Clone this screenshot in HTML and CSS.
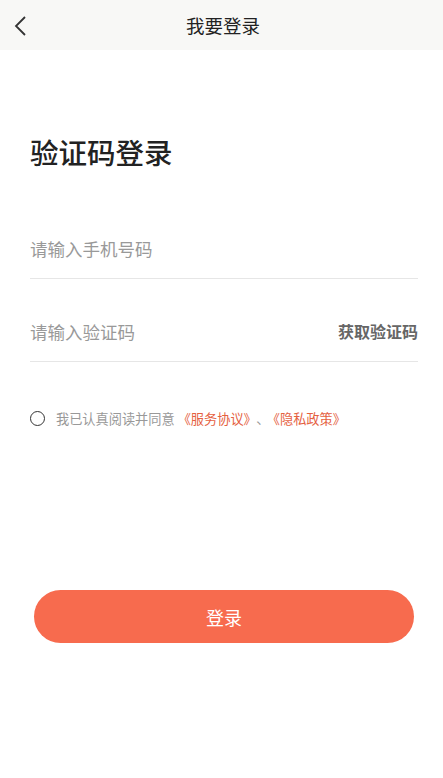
FILE: index.html
```html
<!DOCTYPE html>
<html>
<head>
    <meta charset="UTF-8">
    <title>我要登录</title>
    <link rel="stylesheet" href="styles.css">
</head>
<body>

<div class="header">
    <span class="back">
        <svg width="14" height="22" viewBox="0 0 14 22">
            <path d="M12 2 L3 11 L12 20" fill="none" stroke="#333" stroke-width="1.8"/>
        </svg>
    </span>
    <div class="title">我要登录</div>
</div>

<div class="container">
    <h1>验证码登录</h1>

    <!-- Поля ввода -->
    <div class="field">
        <input type="text" placeholder="请输入手机号码">
    </div>
    <div class="field">
        <input type="text" placeholder="请输入验证码">
        <span class="get-code">获取验证码</span>
    </div>

    <div class="agree">
        <span class="check"></span>
        <span>我已认真阅读并同意 <a href="#">《服务协议》</a><span class="sep">、</span><a href="#">《隐私政策》</a></span>
    </div>

    <button type="button">登录</button>
</div>

</body>
</html>
```

FILE: styles.css
```css
body {
    margin: 0;
    font-family: "Noto Sans CJK SC", "Noto Sans", sans-serif;
    background-color: #fff;
    color: #333;
}
.header {
    height: 50px;
    background-color: #f8f8f6;
    display: flex;
    align-items: center;
    justify-content: center;
    position: relative;
}
.back {
    position: absolute;
    left: 13px;
    top: 15px;
}
.title {
    font-size: 18.5px;
    color: #222;
    margin: 0 0 1px 3px;
}
.container {
    padding: 0 25px 0 30px;
}
h1 {
    margin: 82px 0 48px;
    font-size: 28.5px;
    font-weight: 500;
    color: #222;
    line-height: 40px;
}
.field {
    display: flex;
    align-items: center;
    height: 59px;
    padding-bottom: 2px;
    border-bottom: 1px solid #e6e6e6;
    box-sizing: border-box;
}
.field + .field {
    margin-top: 24px;
}
input {
    flex: 1;
    border: none;
    outline: none;
    font-family: inherit;
    font-size: 17.5px;
    color: #333;
    padding: 0;
    background: transparent;
}
input::placeholder {
    color: #999;
}
.get-code {
    font-size: 16px;
    font-weight: bold;
    color: #666;
}
.agree {
    display: flex;
    align-items: center;
    margin-top: 47px;
    font-size: 13.2px;
    color: #999;
}
.check {
    width: 13px;
    height: 13px;
    border: 1.5px solid #333;
    border-radius: 50%;
    margin-right: 11px;
}
.agree a {
    color: #e5613f;
    text-decoration: none;
}
.sep {
    margin: 0 4px 0 6px;
}
button {
    display: block;
    width: 380px;
    height: 53px;
    margin: 162px 0 0 4px;
    border: none;
    border-radius: 27px;
    background-color: #f76b4e;
    color: #fff;
    font-family: inherit;
    font-size: 18px;
    cursor: pointer;
}
```
